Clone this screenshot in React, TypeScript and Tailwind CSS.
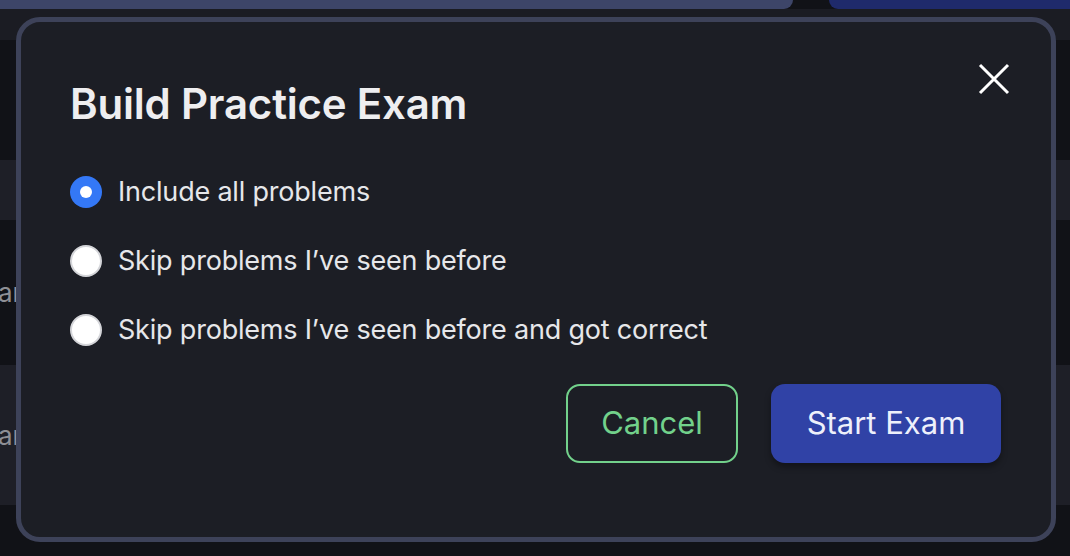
import React from "react";

function Radio({ checked }: { checked?: boolean }) {
  if (checked) {
    return (
      <span className="flex h-[32px] w-[32px] shrink-0 items-center justify-center rounded-full bg-[#3478f6]">
        <span className="h-[12px] w-[12px] rounded-full bg-white" />
      </span>
    );
  }
  return <span className="h-[32px] w-[32px] shrink-0 rounded-full border-2 border-[#d4d5d9] bg-white" />;
}

export default function App() {
  const options = [
    { label: "Include all problems", checked: true },
    { label: "Skip problems I’ve seen before" },
    { label: "Skip problems I’ve seen before and got correct" },
  ];
  return (
    <div
      className="relative h-[556px] w-[1070px] overflow-hidden bg-[#111217]"
      style={{ fontFamily: "Inter, 'Noto Sans', sans-serif" }}
    >
      {/* background page */}
      <div className="flex h-[9px] items-stretch">
        <div className="w-[793px] rounded-br-[12px] bg-[#3d4568]" />
        <div className="w-[36px]" />
        <div className="flex-1 rounded-bl-[12px] bg-[#1f2a6b]" />
      </div>
      <div className="h-[31px] bg-[#1b1c23]" />
      <div className="h-[120px] bg-[#111217]" />
      <div className="h-[60px] bg-[#1e1f27]" />
      <div className="flex h-[145px] items-center bg-[#111217]">
        <span className="-ml-[2px] text-[26px] text-[#8e8f95]">ar</span>
      </div>
      <div className="flex h-[140px] items-center bg-[#1e1f27]">
        <span className="-ml-[2px] text-[26px] text-[#8e8f95]">ar</span>
      </div>
      <div className="h-[51px] bg-[#111217]" />

      {/* modal */}
      <div className="absolute left-[16px] top-[17px] h-[525px] w-[1040px] rounded-[24px] border-[5px] border-[#3d4259] bg-[#1c1e25] pl-[49px] pr-[50px] pt-[57px]">
        <button className="absolute right-[39px] top-[39px] flex h-[36px] w-[36px] items-center justify-center text-white">
          <svg width="32" height="32" viewBox="0 0 32 32" fill="none" stroke="currentColor" strokeWidth="3" strokeLinecap="butt">
            <path d="M2 2 L30 30 M30 2 L2 30" />
          </svg>
        </button>
        <h2 className="text-[42px] font-semibold leading-[50px] tracking-[-0.2px] text-[#eeeef0]">
          Build Practice Exam
        </h2>
        <div className="mt-[47px] flex flex-col gap-[37px]">
          {options.map((o) => (
            <label key={o.label} className="flex h-[32px] items-center gap-[16px]">
              <Radio checked={o.checked} />
              <span className="text-[27px] leading-[32px] tracking-[-0.2px] text-[#e6e7ea]">{o.label}</span>
            </label>
          ))}
        </div>
        <div className="mt-[38px] flex justify-end gap-[33px]">
          <button className="h-[79px] w-[172px] rounded-[14px] border-2 border-[#72d18b] text-[31px] text-[#72d18b]">
            Cancel
          </button>
          <button className="h-[79px] w-[230px] rounded-[14px] bg-[#3042a6] text-[31px] text-[#eef0fb] shadow-[0_4px_6px_rgba(0,0,0,0.35)]">
            Start Exam
          </button>
        </div>
      </div>
    </div>
  );
}
